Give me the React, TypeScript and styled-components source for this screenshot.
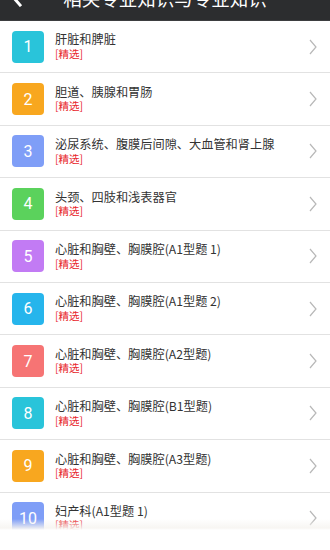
import styled, { createGlobalStyle } from "styled-components";

const GlobalStyle = createGlobalStyle`
  html, body {
    margin: 0;
    padding: 0;
    background: #fff;
    font-family: "Noto Sans CJK SC", "Noto Sans", Roboto, sans-serif;
    overflow: hidden;
  }
`;

type Chapter = {
  id: number;
  title: string;
  color: string;
};

const chapters: Chapter[] = [
  { id: 1, title: "肝脏和脾脏", color: "#29c4da" },
  { id: 2, title: "胆道、胰腺和胃肠", color: "#f8a71f" },
  { id: 3, title: "泌尿系统、腹膜后间隙、大血管和肾上腺", color: "#7f9ef7" },
  { id: 4, title: "头颈、四肢和浅表器官", color: "#5bd25c" },
  { id: 5, title: "心脏和胸壁、胸膜腔(A1型题 1)", color: "#c27bf4" },
  { id: 6, title: "心脏和胸壁、胸膜腔(A1型题 2)", color: "#26b5ec" },
  { id: 7, title: "心脏和胸壁、胸膜腔(A2型题)", color: "#f67474" },
  { id: 8, title: "心脏和胸壁、胸膜腔(B1型题)", color: "#29c4da" },
  { id: 9, title: "心脏和胸壁、胸膜腔(A3型题)", color: "#f8a71f" },
  { id: 10, title: "妇产科(A1型题 1)", color: "#7f9ef7" },
];

export default function App() {
  return (
    <Page>
      <GlobalStyle />
      <Header>
        <HeaderInner>
          <BackIcon viewBox="0 0 12 20">
            <path d="M9 2 L2 10 L9 18" />
          </BackIcon>
          <Title>相关专业知识与专业知识</Title>
        </HeaderInner>
      </Header>
      <List>
        {chapters.map((c) => (
          <Row key={c.id}>
            <NumberBox $color={c.color}>{c.id}</NumberBox>
            <Content>
              <ItemTitle>{c.title}</ItemTitle>
              <Tag>[精选]</Tag>
            </Content>
            <Chevron viewBox="0 0 8 16">
              <path d="M1 1 L7 8 L1 15" />
            </Chevron>
          </Row>
        ))}
      </List>
      <BottomFade />
    </Page>
  );
}

const Page = styled.div`
  width: 330px;
  height: 550px;
  overflow: hidden;
  position: relative;
`;

const Header = styled.div`
  height: 21px;
  overflow: hidden;
  background: #2c2d2f;
  border-bottom: 1px solid #3d3e40;
  box-sizing: border-box;
`;

const HeaderInner = styled.div`
  height: 46px;
  margin-top: -25px;
  display: flex;
  align-items: center;
  padding-left: 11px;
`;

const BackIcon = styled.svg`
  width: 12px;
  height: 20px;
  flex-shrink: 0;
  margin-top: -2px;

  path {
    fill: none;
    stroke: #fff;
    stroke-width: 3;
    stroke-linecap: square;
  }
`;

const Title = styled.div`
  flex: 1;
  text-align: center;
  margin-right: 23px;
  color: #fff;
  font-size: 18.5px;
`;

const List = styled.div`
  display: flex;
  flex-direction: column;
`;

const Row = styled.div`
  height: 52.4px;
  box-sizing: border-box;
  border-bottom: 1px solid #e2e2e2;
  display: flex;
  align-items: center;
  padding: 0 13px 0 12px;
`;

const NumberBox = styled.div<{ $color: string }>`
  width: 32px;
  height: 32px;
  border-radius: 4px;
  background: ${(p) => p.$color};
  color: #fff;
  font-family: Roboto, "Noto Sans", sans-serif;
  font-size: 16px;
  display: flex;
  align-items: center;
  justify-content: center;
  flex-shrink: 0;
`;

const Content = styled.div`
  flex: 1;
  display: flex;
  flex-direction: column;
  gap: 1.5px;
  margin-left: 11px;
  margin-top: -1px;
`;

const ItemTitle = styled.div`
  font-size: 12.2px;
  line-height: 14px;
  color: #333;
`;

const Tag = styled.div`
  font-size: 10.5px;
  line-height: 12px;
  color: #e8262c;
`;

const Chevron = styled.svg`
  width: 8px;
  height: 16px;
  flex-shrink: 0;

  path {
    fill: none;
    stroke: #b8b8b8;
    stroke-width: 1.2;
  }
`;

const BottomFade = styled.div`
  position: absolute;
  left: 0;
  right: 0;
  bottom: 0;
  height: 31px;
  background: linear-gradient(
    to bottom,
    rgba(255, 255, 255, 0) 0px,
    rgba(246, 244, 240, 0.85) 9px,
    #ffffff 11px,
    #ffffff 100%
  );
`;
